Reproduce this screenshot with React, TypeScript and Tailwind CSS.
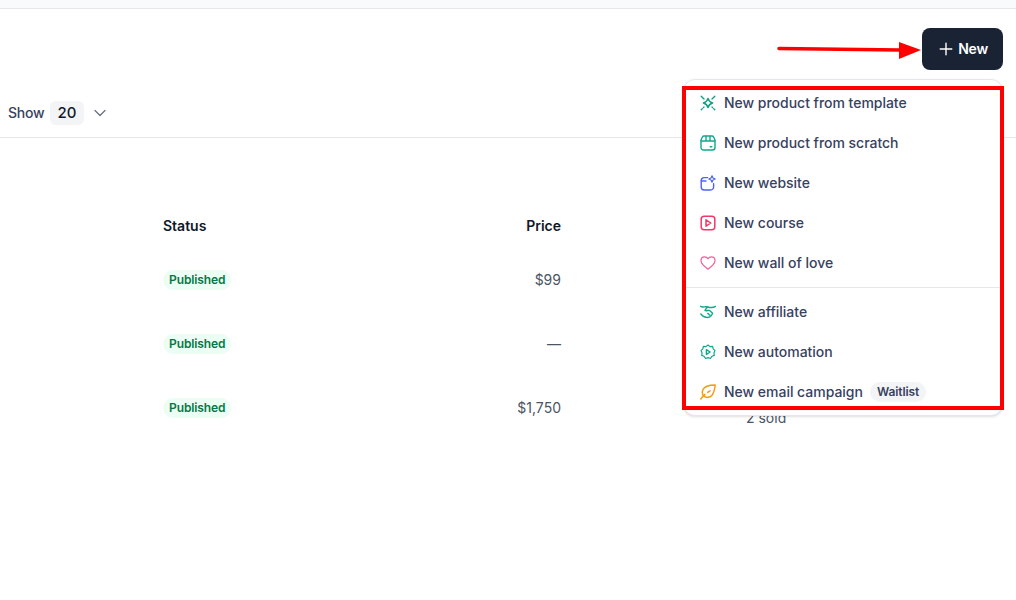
import React from "react";

const rows = [
  { status: "Published", price: "$99" },
  { status: "Published", price: "—" },
  { status: "Published", price: "$1,750" },
];

const Icon = ({ children, className }: { children: React.ReactNode; className: string }) => (
  <svg viewBox="0 0 16 16" fill="none" stroke="currentColor" strokeWidth="1.4" strokeLinecap="round" strokeLinejoin="round" className={`h-4 w-4 shrink-0 ${className}`}>
    {children}
  </svg>
);

const TemplateIcon = () => (
  <Icon className="text-[#0f9d84]">
    <path d="M8 3.4 C8.6 5.8 10.2 7.4 12.6 8 C10.2 8.6 8.6 10.2 8 12.6 C7.4 10.2 5.8 8.6 3.4 8 C5.8 7.4 7.4 5.8 8 3.4 Z" strokeWidth="1.5" />
    <path d="M1.2 1.2 L4 4 M14.8 1.2 L12 4 M1.2 14.8 L2.4 13.6 M3.4 12.6 L4 12 M14.8 14.8 L13.6 13.6 M12.6 12.6 L12 12" strokeWidth="1.3" />
  </Icon>
);

const ScratchIcon = () => (
  <Icon className="text-[#12a88c]">
    <path d="M4 1 H12 A1.8 1.8 0 0 1 13.6 2 L15 5 V12.5 A2.5 2.5 0 0 1 12.5 15 H3.5 A2.5 2.5 0 0 1 1 12.5 V5 L2.4 2 A1.8 1.8 0 0 1 4 1 Z" />
    <path d="M1 6 H15 M6 1.2 V6 M10 1.2 V6 M10.2 11.8 H11.8" />
  </Icon>
);

const WebsiteIcon = () => (
  <Icon className="text-[#4f63f0]">
    <path d="M7.6 2.6 H4.2 A3 3 0 0 0 1.2 5.6 V12 A3 3 0 0 0 4.2 15 H10.6 A3 3 0 0 0 13.6 12 V8.8" />
    <path d="M1.4 6 H6" />
    <path d="M12 0.8 L13 3 L15.2 4 L13 5 L12 7.2 L11 5 L8.8 4 L11 3 Z" strokeWidth="1.2" />
  </Icon>
);

const CourseIcon = () => (
  <Icon className="text-[#f0386b]">
    <rect x="1.2" y="1.2" width="13.6" height="13.6" rx="3" strokeWidth="1.5" />
    <path d="M6 4.8 L10.8 8 L6 11.2 Z" strokeWidth="1.5" />
  </Icon>
);

const HeartIcon = () => (
  <Icon className="text-[#f0609a]">
    <path d="M8 14.2 C4 11.3 1 8.8 1 5.5 C1 3.3 2.7 1.8 4.6 1.8 C6 1.8 7.3 2.5 8 3.8 C8.7 2.5 10 1.8 11.4 1.8 C13.3 1.8 15 3.3 15 5.5 C15 8.8 12 11.3 8 14.2 Z" strokeWidth="1.2" />
  </Icon>
);

const AffiliateIcon = () => (
  <Icon className="text-[#12a88c]">
    <path d="M0.6 2.4 C3 3.8 4.6 2.2 7 2.8 C9.4 3.4 12.4 4.6 15.4 2.4" />
    <path d="M7.4 3 L5 6.4 C6.4 7.4 8 6 9.6 6.4 L12.6 9.2 C11.4 12.6 8.4 14 5.6 13.2" />
    <path d="M7.8 9.4 L10 11.2 M0.8 10 C2 11.6 3.4 12.8 5.6 13.2" />
  </Icon>
);

const AutomationIcon = () => (
  <Icon className="text-[#12a88c]">
    <path d="M8 1 L10 2.6 L12.6 2.4 L13.2 4.9 L15 6.6 L13.9 8.9 L14.3 11.4 L11.9 12.3 L10.4 14.5 L8 13.6 L5.6 14.5 L4.1 12.3 L1.7 11.4 L2.1 8.9 L1 6.6 L2.8 4.9 L3.4 2.4 L6 2.6 Z" strokeWidth="1.2" />
    <path d="M6.4 5.6 L10.2 8 L6.4 10.4 Z" />
  </Icon>
);

const CampaignIcon = () => (
  <Icon className="text-[#f59e0b]">
    <path d="M15.2 1 C9.5 1 4.4 2.2 2.8 6 C1.9 8.4 2.4 10.6 3.8 12.2 C6.2 14 9.8 13.8 12 11.2 C14 8.6 14.8 5 15.2 1 Z" strokeWidth="1.5" />
    <path d="M0.8 15 C2.6 12.6 3.4 11.8 5 10.4 M7.6 8.4 L10 6.8" strokeWidth="1.5" />
  </Icon>
);

const topItems = [
  { label: "New product from template", icon: <TemplateIcon /> },
  { label: "New product from scratch", icon: <ScratchIcon /> },
  { label: "New website", icon: <WebsiteIcon /> },
  { label: "New course", icon: <CourseIcon /> },
  { label: "New wall of love", icon: <HeartIcon /> },
];

const bottomItems = [
  { label: "New affiliate", icon: <AffiliateIcon /> },
  { label: "New automation", icon: <AutomationIcon /> },
  { label: "New email campaign", icon: <CampaignIcon />, badge: "Waitlist" },
];

const MenuItem = ({ label, icon, badge }: { label: string; icon: React.ReactNode; badge?: string }) => (
  <div className="flex h-10 items-center gap-2 px-4 text-sm font-[550] tracking-[-0.02px] text-[#374160]">
    {icon}
    <span>{label}</span>
    {badge && (
      <span className="-ml-px rounded-full bg-[#f3f4f6] px-[7px] py-px text-xs font-semibold leading-[18px] tracking-[-0.1px]">{badge}</span>
    )}
  </div>
);

export default function App() {
  return (
    <div className="relative h-[600px] w-[1016px] overflow-hidden bg-white font-['Inter',sans-serif]">
      <div className="h-[9px] border-b border-[#e5e7eb] bg-[#f9fafb]" />

      <div className="flex justify-end pr-[13px] pt-[19px]">
        <button className="flex h-[42px] items-center gap-1 rounded-lg bg-[#1a2333] pl-4 pr-[15px] text-sm font-semibold tracking-[-0.2px] text-white">
          <svg viewBox="0 0 16 16" className="h-4 w-4" fill="none" stroke="currentColor" strokeWidth="1.4" strokeLinecap="round">
            <path d="M8 2.2 V13.8 M2.2 8 H13.8" />
          </svg>
          New
        </button>
      </div>

      <div className="mt-[18px] flex h-[50px] items-center border-b border-[#e5e7eb] pl-2 text-sm">
        <span className="font-medium tracking-[-0.2px] text-[#374160]">Show</span>
        <span className="ml-[5px] rounded-md bg-[#f3f4f6] px-2 py-[2px] text-[15px] font-medium leading-5 text-[#111827]">20</span>
        <svg viewBox="0 0 16 16" className="ml-2 h-4 w-4 text-[#6b7280]" fill="none" stroke="currentColor" strokeWidth="1.3" strokeLinecap="round" strokeLinejoin="round">
          <path d="M3 5.5 L8 10.5 L13 5.5" />
        </svg>
      </div>

      <div className="pl-[163px] pt-[76px] text-sm">
        <div className="grid h-6 w-[398px] grid-cols-2 items-center font-semibold text-[#111827]">
          <span>Status</span>
          <span className="text-right">Price</span>
        </div>
        <div className="pt-[10px]">
          {rows.map((row, i) => (
            <div key={i} className="grid h-[64px] w-[398px] grid-cols-2 items-center">
              <span className="w-fit rounded-full bg-[#ecfdf3] px-[6px] text-xs font-semibold leading-5 tracking-[-0.1px] text-[#067647]">{row.status}</span>
              <span className="text-right text-[#4b5563]">{row.price}</span>
            </div>
          ))}
        </div>
      </div>

      <span className="absolute left-[746px] top-[408px] text-sm text-[#4b5563]">2 sold</span>

      <div className="absolute left-[683px] top-[79px] w-[320px] rounded-xl border border-[#e5e7eb] bg-white py-[3px] shadow-sm">
        {topItems.map((item) => (
          <MenuItem key={item.label} {...item} />
        ))}
        <div className="my-1 border-t border-[#e5e7eb]" />
        {bottomItems.map((item) => (
          <MenuItem key={item.label} {...item} />
        ))}
      </div>

      {/* red annotation on top of the screenshot */}
      <div className="absolute left-[682px] top-[86px] h-[324px] w-[322px] border-4 border-[#ff0000]" />
      <svg className="absolute left-[776px] top-[38px] h-[24px] w-[146px]" viewBox="0 0 146 24" fill="none">
        <path d="M3 10.5 L124 12" stroke="#ff0000" strokeWidth="3.5" strokeLinecap="round" />
        <path d="M123 4 L145 12 L123 21 Z" fill="#ff0000" />
      </svg>
    </div>
  );
}
